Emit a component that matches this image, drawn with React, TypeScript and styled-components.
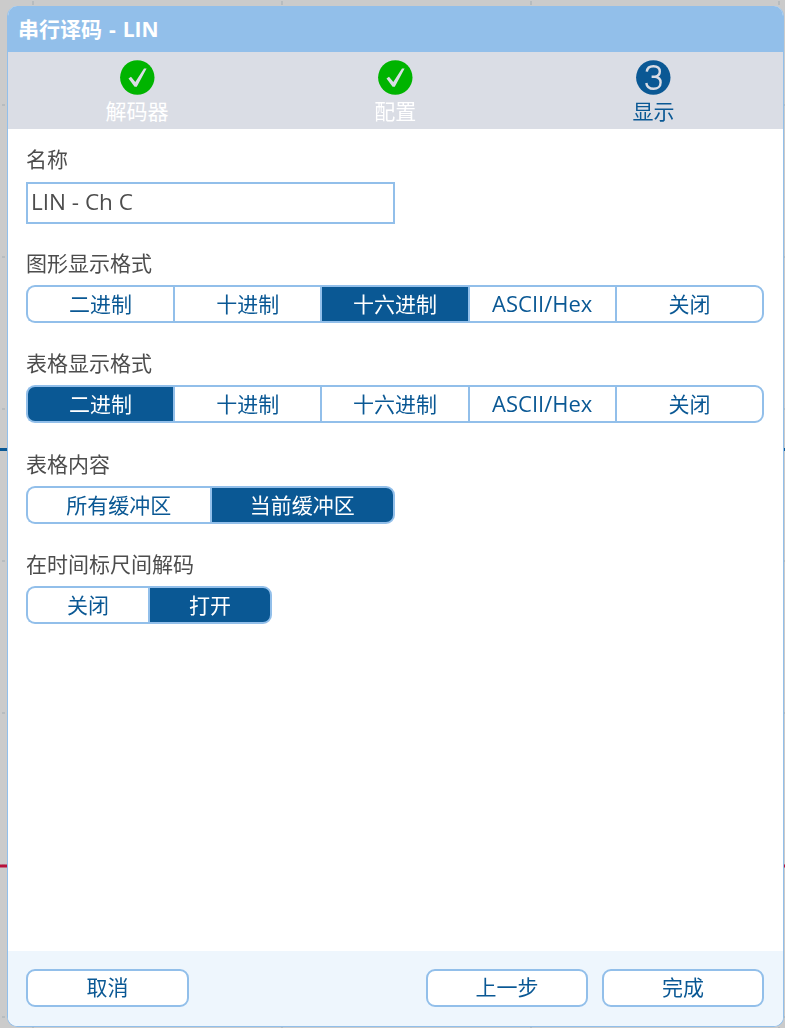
import React, { FC } from 'react';
import styled, { createGlobalStyle } from 'styled-components';

const FONT = `"Open Sans", "Noto Sans", "Noto Sans CJK SC", sans-serif`;
const BLUE = '#0a5894';
const EDGE = '#92bfea';

const GlobalStyle = createGlobalStyle`
	html, body {
		margin: 0;
		padding: 0;
		height: 100%;
		background: #cbcbcb;
		overflow: hidden;
	}
	body {
		font-family: ${FONT};
	}
`;

const Graticule = styled.svg`
	position: fixed;
	left: 0;
	top: 0;
	z-index: 0;
`;

const Dialog = styled.div`
	position: relative;
	z-index: 1;
	display: flex;
	flex-direction: column;
	box-sizing: border-box;
	width: 776.5px;
	height: 1020.5px;
	margin: 6px 0 0 7px;
	border: 1.5px solid ${EDGE};
	border-top: 0;
	border-left-width: 1px;
	border-radius: 10px;
	background: #fff;
	overflow: hidden;
`;

const TitleBar = styled.div`
	flex: none;
	height: 46px;
	padding-left: 10px;
	background: ${EDGE};
	color: #fff;
	font-size: 21px;
	font-weight: 700;
	line-height: 46px;
	word-spacing: 1.5px;
`;

const Steps = styled.div`
	flex: none;
	display: grid;
	grid-template-columns: repeat(3, 1fr);
	height: 77px;
	background: #dadde5;
`;

const Step = styled.div`
	display: flex;
	flex-direction: column;
	align-items: center;
	padding-top: 8px;
`;

const StepLabel = styled.span<{ $current?: boolean }>`
	margin-top: 3px;
	color: ${(p) => (p.$current ? BLUE : '#fff')};
	font-size: 21px;
	line-height: 26px;
`;

const Body = styled.div`
	flex: 1;
	padding: 16px 18px 0;
`;

const Field = styled.div<{ $after?: number }>`
	margin-bottom: ${(p) => p.$after ?? 26.33}px;
`;

const Label = styled.div<{ $gap?: number }>`
	margin-bottom: ${(p) => p.$gap ?? 8}px;
	color: #4d4d4d;
	font-size: 21px;
	line-height: 28px;
`;

const NameInput = styled.input`
	display: block;
	box-sizing: border-box;
	width: 369px;
	height: 42px;
	padding: 0 3px 3px;
	border: 2px solid ${EDGE};
	outline: none;
	color: #4d4d4d;
	font-family: ${FONT};
	font-size: 22.5px;
`;

const Segments = styled.div<{ $width: number }>`
	display: flex;
	width: ${(p) => p.$width}px;
	height: 38px;
`;

const Segment = styled.div<{ $on?: boolean; $latin?: boolean }>`
	flex: 1 1 0;
	display: flex;
	align-items: center;
	justify-content: center;
	box-sizing: border-box;
	padding-bottom: 2px;
	border: solid ${EDGE};
	border-width: 2px 0 2px 2px;
	background: ${(p) => (p.$on ? BLUE : '#fff')};
	color: ${(p) => (p.$on ? '#fff' : BLUE)};
	font-size: ${(p) => (p.$latin ? 22 : 21)}px;

	&:first-child {
		border-radius: 9px 0 0 9px;
	}
	&:last-child {
		border-right-width: 2px;
		border-radius: 0 9px 9px 0;
	}
`;

const Footer = styled.div`
	flex: none;
	display: flex;
	align-items: flex-start;
	justify-content: space-between;
	box-sizing: border-box;
	height: 75px;
	padding: 18px 18.5px 0 18px;
	background: #eef6fd;
`;

const ButtonGroup = styled.div`
	display: flex;
	gap: 14px;
`;

const FooterButton = styled.div<{ $width: number }>`
	display: flex;
	align-items: center;
	justify-content: center;
	box-sizing: border-box;
	width: ${(p) => p.$width}px;
	height: 38px;
	padding-bottom: 3px;
	border: 2px solid ${EDGE};
	border-radius: 9px;
	background: #fff;
	color: ${BLUE};
	font-size: 21px;
`;

const DoneIcon: FC = () => (
	<svg width="35" height="35" viewBox="0 0 35 35">
		<circle cx="17.3" cy="17.5" r="17.2" fill="#00b400" />
		<path d="M8.5 18.5 L11 16.8 L15.3 22 L24 8.4 L26.6 8.4 L16.8 26.8 L14.6 26.8 Z" fill="#dadde5" />
	</svg>
);

const CurrentIcon: FC = () => (
	<svg width="35" height="35" viewBox="0 0 35 35">
		<circle cx="17.3" cy="17.5" r="17.2" fill={BLUE} />
		<path
			d="M10.8 11.6 C11.2 7.8 14 6.2 17.4 6.2 C21.2 6.2 23.8 8.2 23.8 11.6 C23.8 14.2 22 16.2 19.2 16.7 C22.4 17.1 24.6 19.2 24.6 22.4 C24.6 26.6 21.6 28.8 17.6 28.8 C13.6 28.8 10.8 26.8 10.3 23 M15.6 16.8 L19.2 16.8"
			fill="none"
			stroke="#dadde5"
			strokeWidth="2.4"
		/>
	</svg>
);

const H_TICKS = [33, 282, 531, 779];
const V_TICKS = [105, 257, 409, 561, 713, 865, 1017];

const Backdrop: FC = () => (
	<Graticule width="785" height="1028" viewBox="0 0 785 1028">
		{H_TICKS.map((x) => (
			<g key={x} stroke="#a3adb3" strokeWidth="1">
				<line x1={x} y1="1" x2={x} y2="5" />
				<line x1={x} y1="1027" x2={x} y2="1028" />
			</g>
		))}
		{V_TICKS.map((y) => (
			<g key={y} stroke="#a3adb3" strokeWidth="1">
				<line x1="2" y1={y} x2="5" y2={y} />
				<line x1="784" y1={y} x2="785" y2={y} />
			</g>
		))}
		<line x1="0" y1="449.5" x2="7" y2="449.5" stroke={BLUE} strokeWidth="3" />
		<line x1="783" y1="449.5" x2="785" y2="449.5" stroke={BLUE} strokeWidth="3" />
		<line x1="0" y1="866" x2="7" y2="866" stroke="#b8123c" strokeWidth="3" />
		<line x1="783" y1="866" x2="785" y2="866" stroke="#b8123c" strokeWidth="3" />
	</Graticule>
);

const FORMATS = ['二进制', '十进制', '十六进制', 'ASCII/Hex', '关闭'];

const App: FC = () => (
	<>
		<GlobalStyle />
		<Backdrop />
		<Dialog>
			<TitleBar>串行译码 - LIN</TitleBar>
			<Steps>
				<Step>
					<DoneIcon />
					<StepLabel>解码器</StepLabel>
				</Step>
				<Step>
					<DoneIcon />
					<StepLabel>配置</StepLabel>
				</Step>
				<Step>
					<CurrentIcon />
					<StepLabel $current>显示</StepLabel>
				</Step>
			</Steps>
			<Body>
				<Field $after={25}>
					<Label $gap={9}>名称</Label>
					<NameInput defaultValue="LIN - Ch C" />
				</Field>
				<Field>
					<Label>图形显示格式</Label>
					<Segments $width={738}>
						{FORMATS.map((f) => (
							<Segment key={f} $on={f === '十六进制'} $latin={f === 'ASCII/Hex'}>
								{f}
							</Segment>
						))}
					</Segments>
				</Field>
				<Field>
					<Label>表格显示格式</Label>
					<Segments $width={738}>
						{FORMATS.map((f) => (
							<Segment key={f} $on={f === '二进制'} $latin={f === 'ASCII/Hex'}>
								{f}
							</Segment>
						))}
					</Segments>
				</Field>
				<Field>
					<Label>表格内容</Label>
					<Segments $width={369}>
						<Segment>所有缓冲区</Segment>
						<Segment $on>当前缓冲区</Segment>
					</Segments>
				</Field>
				<Field>
					<Label>在时间标尺间解码</Label>
					<Segments $width={246}>
						<Segment>关闭</Segment>
						<Segment $on>打开</Segment>
					</Segments>
				</Field>
			</Body>
			<Footer>
				<FooterButton $width={163}>取消</FooterButton>
				<ButtonGroup>
					<FooterButton $width={162}>上一步</FooterButton>
					<FooterButton $width={162}>完成</FooterButton>
				</ButtonGroup>
			</Footer>
		</Dialog>
	</>
);

export default App;
